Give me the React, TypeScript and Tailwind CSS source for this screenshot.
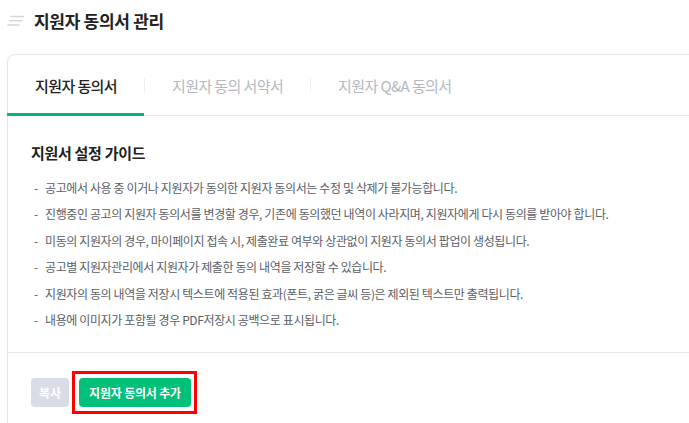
import { useState } from 'react'

const tabs = ['지원자 동의서', '지원자 동의 서약서', '지원자 Q&A 동의서']

const guides = [
  '공고에서 사용 중 이거나 지원자가 동의한 지원자 동의서는 수정 및 삭제가 불가능합니다.',
  '진행중인 공고의 지원자 동의서를 변경할 경우, 기존에 동의했던 내역이 사라지며, 지원자에게 다시 동의를 받아야 합니다.',
  '미동의 지원자의 경우, 마이페이지 접속 시, 제출완료 여부와 상관없이 지원자 동의서 팝업이 생성됩니다.',
  '공고별 지원자관리에서 지원자가 제출한 동의 내역을 저장할 수 있습니다.',
  '지원자의 동의 내역을 저장시 텍스트에 적용된 효과(폰트, 굵은 글씨 등)은 제외된 텍스트만 출력됩니다.',
  '내용에 이미지가 포함될 경우 PDF저장시 공백으로 표시됩니다.',
]

function MenuIcon() {
  return (
    <svg width="18" height="12" viewBox="0 0 18 12" fill="none" stroke="#d4d6db" strokeWidth="1.6" strokeLinecap="round">
      <path d="M4 1.5h12.5" />
      <path d="M2.5 5.8h12.5" />
      <path d="M1 10h11" />
    </svg>
  )
}

export default function App() {
  const [active, setActive] = useState(0)

  return (
    <div className="w-[689px] h-[423px] overflow-hidden bg-white font-['Noto_Sans_CJK_KR','Noto_Sans',sans-serif]">
      <div className="flex items-center h-[40px] pl-[7px] pt-[1px]">
        <MenuIcon />
        <h1 className="ml-[9px] text-[17px] font-bold text-[#222] tracking-[-0.3px]">지원자 동의서 관리</h1>
      </div>

      <div className="ml-[7px] mt-[14px] w-[720px] border border-[#e6e7eb] rounded-[8px] bg-white">
        <div className="flex h-[61px] border-b border-[#e6e7eb]">
          {tabs.map((t, i) => (
            <div key={t} className="flex items-center">
              {i > 0 && <div className="w-px h-[14px] bg-[#eeeff1]" />}
              <button
                onClick={() => setActive(i)}
                className={
                  'relative h-full px-[27px] pt-[3px] text-[15px] tracking-[-0.6px] ' +
                  (active === i ? 'text-[#222] font-medium' : 'text-[#b4b8c0]')
                }
              >
                {t}
                {active === i && <span className="absolute left-[-1px] right-0 bottom-[-1px] h-[3px] bg-[#00b874]" />}
              </button>
            </div>
          ))}
        </div>

        <div className="px-[23px] pt-[26px] pb-[19px] border-b border-[#e6e7eb]">
          <h2 className="text-[15px] font-bold text-[#222] tracking-[-0.3px] leading-[22px]">지원서 설정 가이드</h2>
          <ul className="mt-[11px]">
            {guides.map((g) => (
              <li key={g} className="flex leading-[26.4px] text-[12px] text-[#5a5e66] tracking-[-0.38px]">
                <span className="w-[14px] pl-[3px]">-</span>
                <span>{g}</span>
              </li>
            ))}
          </ul>
        </div>

        <div className="flex items-center gap-[3px] pl-[23px] pt-[18px] pb-[30px]">
          <button disabled className="h-[29px] px-[8px] rounded-[4px] bg-[#d9dbe6] text-white text-[12px] font-bold">복사</button>
          <div className="border-[3px] border-[#f00] py-[4px] pl-[4px] pr-[3px]">
            <button className="block h-[29px] px-[10px] rounded-[4px] bg-[#00c07a] text-white text-[12px] font-bold tracking-[-0.2px]">
              지원자 동의서 추가
            </button>
          </div>
        </div>
      </div>
    </div>
  )
}
